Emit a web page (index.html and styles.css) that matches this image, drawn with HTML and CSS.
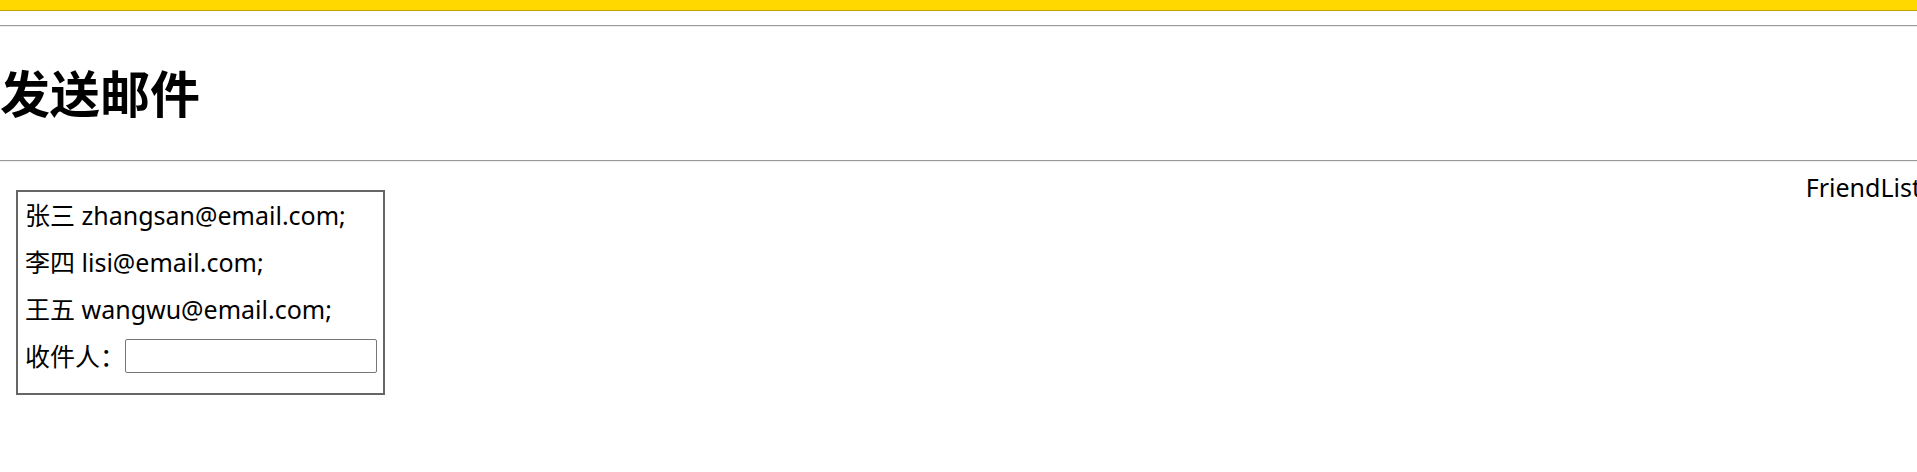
FILE: index.html
```html
<!DOCTYPE html>
<html lang="zh-CN">
<head>
<meta charset="utf-8">
<title>发送邮件</title>
<link rel="stylesheet" href="styles.css">
</head>
<body>
<div class="topbar"></div>
<hr class="rule rule-top">
<h1 class="title">发送邮件</h1>
<hr class="rule rule-bottom">
<div class="main">
  <div class="mailbox">
    <div class="row">张三 zhangsan@email.com;</div>
    <div class="row">李四 lisi@email.com;</div>
    <div class="row">王五 wangwu@email.com;</div>
    <div class="row"><label class="label" for="to">收件人：</label><input id="to" class="to-input" type="text"></div>
  </div>
  <div class="friendlist">FriendList</div>
</div>
</body>
</html>
```

FILE: styles.css
```css
html, body {
  margin: 0;
  padding: 0;
  background: #fff;
  overflow: hidden;
}
body {
  font-family: "Noto Sans", "Noto Sans CJK SC", sans-serif;
  color: #000;
  font-size: 25px;
}
.topbar {
  height: 10px;
  background: #ffd800;
  border-bottom: 1px solid #c4a300;
}
.rule {
  margin: 0;
  border: 0;
  border-top: 1px solid #9a9a9a;
  border-bottom: 1px solid #eeeeee;
  height: 0;
}
.rule-top {
  margin-top: 14px;
}
.title {
  margin: 31px 0 35px;
  font-size: 50px;
  line-height: 67px;
  font-weight: bold;
  font-family: "Noto Sans CJK SC", sans-serif;
}
.main {
  display: flex;
  justify-content: space-between;
  align-items: flex-start;
  padding-top: 8px;
}
.mailbox {
  margin-top: 20px;
  margin-left: 16px;
  border: 2px solid #666;
  padding: 6px 6px 20px 7px;
  display: flex;
  flex-direction: column;
}
.row {
  height: 34px;
  line-height: 34px;
  margin-bottom: 13px;
  display: flex;
  align-items: center;
  white-space: nowrap;
}
.row:last-child {
  margin-bottom: 0;
}
.label {
  margin-right: 0;
}
.to-input {
  box-sizing: border-box;
  width: 252px;
  height: 34px;
  border: 1px solid #767676;
  border-radius: 2px;
  padding: 0 2px;
  margin: 0;
  font-size: 16px;
}
.friendlist {
  line-height: 34px;
  margin-right: -4px;
}
```
